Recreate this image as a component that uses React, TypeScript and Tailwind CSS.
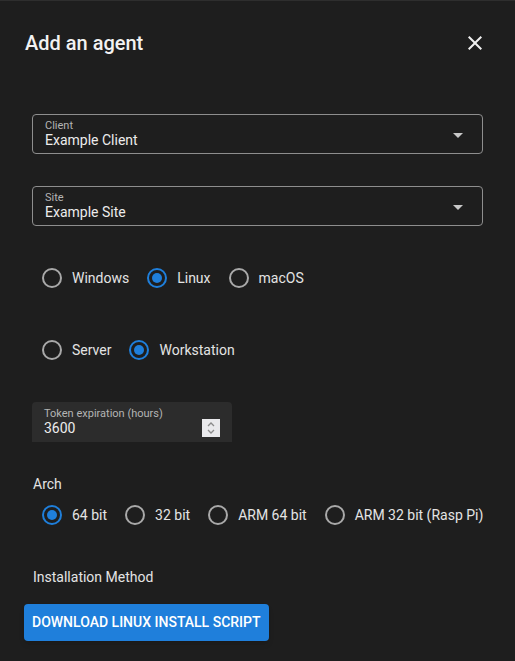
import React, { useState } from "react";

// dark MUI-ish palette
const BLUE = "#1f7fdb";

function Radio({
  label,
  checked,
  onClick,
}: {
  label: string;
  checked: boolean;
  onClick: () => void;
}) {
  return (
    <button type="button" onClick={onClick} className="flex items-center gap-[10px] cursor-pointer">
      <span
        className={
          checked
            ? "w-5 h-5 rounded-full border-2 border-[#1f7fdb] flex items-center justify-center"
            : "w-5 h-5 rounded-full border-2 border-[#a9a9a9] flex items-center justify-center"
        }
      >
        {checked && <span className="w-[10px] h-[10px] rounded-full bg-[#1f7fdb]" />}
      </span>
      <span className="text-[14px] text-[#e4e4e4]">{label}</span>
    </button>
  );
}

function RadioRow({
  options,
  value,
  onChange,
}: {
  options: string[];
  value: string;
  onChange: (v: string) => void;
}) {
  return (
    <div className="flex items-center gap-[18px] pl-[42px] h-[42px]">
      {options.map((o) => (
        <Radio key={o} label={o} checked={value === o} onClick={() => onChange(o)} />
      ))}
    </div>
  );
}

function SelectBox({ label, value }: { label: string; value: string }) {
  return (
    <div className="mx-[32px] h-[40px] rounded-[4px] border border-[#8e8e8e] flex items-center pl-[12px] pr-[19px]">
      <div className="flex-1 flex flex-col leading-none">
        <span className="text-[11px] text-[#b4b4b4] leading-[13px]">{label}</span>
        <span className="text-[14px] text-[#ececec] leading-[17px]">{value}</span>
      </div>
      <svg width="10" height="5" viewBox="0 0 10 5" className="mt-[2px]">
        <path d="M0 0 L10 0 L5 5 Z" fill="#c8c8c8" />
      </svg>
    </div>
  );
}

export default function App() {
  const [os, setOs] = useState("Linux");
  const [kind, setKind] = useState("Workstation");
  const [arch, setArch] = useState("64 bit");

  return (
    <div
      className="w-[515px] h-[661px] bg-[#1e1e1e] border-t border-[#2e2e2e] overflow-hidden"
      style={{ fontFamily: "Roboto, 'Liberation Sans', sans-serif" }}
    >
      {/* header */}
      <div className="flex items-center justify-between pl-[25px] pr-[28px] pt-[25px] h-[58px]">
        <h2 className="text-[20px] font-medium text-[#f2f2f2] leading-[32px]">Add an agent</h2>
        <svg width="24" height="24" viewBox="0 0 24 24">
          <path
            d="M19 6.41 17.59 5 12 10.59 6.41 5 5 6.41 10.59 12 5 17.59 6.41 19 12 13.41 17.59 19 19 17.59 13.41 12z"
            fill="#f0f0f0"
          />
        </svg>
      </div>

      <div className="mt-[55px]">
        <SelectBox label="Client" value="Example Client" />
      </div>
      <div className="mt-[32px]">
        <SelectBox label="Site" value="Example Site" />
      </div>

      <div className="mt-[31px]">
        <RadioRow options={["Windows", "Linux", "macOS"]} value={os} onChange={setOs} />
      </div>
      <div className="mt-[30px]">
        <RadioRow options={["Server", "Workstation"]} value={kind} onChange={setKind} />
      </div>

      {/* token expiration */}
      <div className="mt-[31px] ml-[32px] w-[200px] h-[40px] bg-[#2c2c2c] rounded-t-[4px] flex items-center pl-[12px] pr-[12px]">
        <div className="flex-1 flex flex-col">
          <span className="text-[11px] text-[#b4b4b4] leading-[13px]">Token expiration (hours)</span>
          <span className="text-[14px] text-[#ececec] leading-[17px]">3600</span>
        </div>
        <div className="w-[18px] h-[18px] bg-[#e9e9ec] flex flex-col items-center justify-center gap-[2px] mt-[12px]">
          <svg width="8" height="5" viewBox="0 0 8 5">
            <path d="M1 4 L4 1 L7 4" stroke="#8a8a8a" strokeWidth="1.3" fill="none" />
          </svg>
          <svg width="8" height="5" viewBox="0 0 8 5">
            <path d="M1 1 L4 4 L7 1" stroke="#8a8a8a" strokeWidth="1.3" fill="none" />
          </svg>
        </div>
      </div>

      <div className="mt-[30px] pl-[33px] text-[14px] text-[#e4e4e4] leading-[24px]">Arch</div>
      <div className="-mt-[2px]">
        <RadioRow
          options={["64 bit", "32 bit", "ARM 64 bit", "ARM 32 bit (Rasp Pi)"]}
          value={arch}
          onChange={setArch}
        />
      </div>

      <div className="mt-[29px] pl-[33px] text-[14px] text-[#e4e4e4] leading-[24px]">
        Installation Method
      </div>

      <button
        type="button"
        className="mt-[15px] ml-[24px] h-[37px] px-[8px] rounded-[4px] text-white text-[14px] font-medium uppercase shadow-md"
        style={{ backgroundColor: BLUE }}
      >
        Download Linux Install Script
      </button>
    </div>
  );
}
